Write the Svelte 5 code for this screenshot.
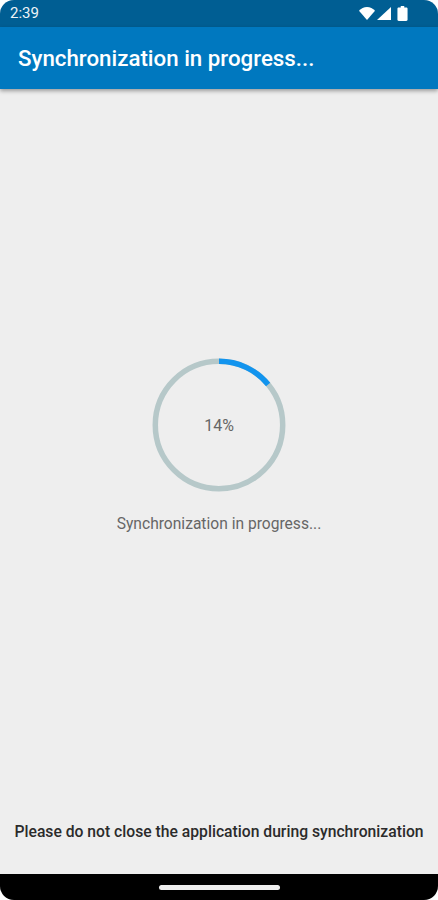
<script>
    const percent = 14;
    const radius = 63.7;
    const circumference = 2 * Math.PI * radius;
    const dash = (circumference * percent) / 100;
</script>

<div class="screen">
    <div class="status-bar">
        <span class="time">2:39</span>
        <div class="status-icons">
            <svg width="16" height="13" viewBox="0 0 16 12" preserveAspectRatio="none">
                <path d="M0 3.4C2 1.4 5 0 8 0s6 1.4 8 3.4L8 12z" fill="#fff" />
            </svg>
            <svg class="signal" width="14" height="13" viewBox="0 0 14 13">
                <path d="M14 0v13H0z" fill="#fff" />
            </svg>
            <svg width="11" height="15" viewBox="0 0 10 15" preserveAspectRatio="none">
                <path
                    d="M3.4 0h3.2v1.4h1.8c.7 0 1.2.5 1.2 1.2v11.2c0 .7-.5 1.2-1.2 1.2H1.6c-.7 0-1.2-.5-1.2-1.2V2.600c0-.7.5-1.200 1.200-1.200h1.800z"
                    fill="#fff"
                />
            </svg>
        </div>
    </div>

    <header class="app-bar">
        <h1>Synchronization in progress...</h1>
    </header>

    <main>
        <div class="progress">
            <svg class="ring" width="134" height="134" viewBox="0 0 134 134">
                <circle cx="67" cy="67" r={radius} class="track" />
                <circle
                    cx="67"
                    cy="67"
                    r={radius}
                    class="bar"
                    stroke-dasharray="{dash} {circumference}"
                    transform="rotate(-90 67 67)"
                />
            </svg>
            <span class="percent">{percent}%</span>
        </div>
        <p class="message">Synchronization in progress...</p>
        <p class="warning">Please do not close the application during synchronization</p>
    </main>

    <div class="nav-bar">
        <div class="home-pill"></div>
    </div>
</div>

<style>
    :global(body) {
        background: #fff;
    }

    .screen {
        height: 900px;
        display: flex;
        flex-direction: column;
        background: #eeeeee;
        border-radius: 14px;
        overflow: hidden;
        font-family: Roboto, "Noto Sans", sans-serif;
    }

    .status-bar {
        height: 27px;
        flex: none;
        display: flex;
        align-items: center;
        justify-content: space-between;
        padding: 0 30px 0 10px;
        background: #005e93;
        color: #eef3f7;
    }

    .time {
        font-size: 15px;
        line-height: 27px;
    }

    .status-icons {
        display: flex;
        align-items: center;
        gap: 2px;
    }

    .signal {
        margin-right: 4px;
    }

    .app-bar {
        height: 62px;
        flex: none;
        display: flex;
        align-items: center;
        padding: 0 18px;
        background: #0078bf;
        box-shadow: 0 2px 4px rgba(0, 0, 0, 0.35);
        z-index: 1;
    }

    h1 {
        margin: 0;
        font-size: 22.3px;
        font-weight: 500;
        color: #fff;
    }

    main {
        flex: 1;
        display: flex;
        flex-direction: column;
        align-items: center;
        padding: 269px 0 32px;
    }

    .progress {
        position: relative;
        width: 134px;
        height: 134px;
    }

    .ring {
        display: block;
    }

    .track,
    .bar {
        fill: none;
        stroke-width: 5.5;
    }

    .track {
        stroke: #b6c8c9;
    }

    .bar {
        stroke: #1294ee;
    }

    .percent {
        position: absolute;
        inset: 0;
        display: flex;
        align-items: center;
        justify-content: center;
        font-size: 16px;
        color: #666;
    }

    .message {
        margin: 22px 0 0;
        font-size: 15.6px;
        line-height: 20px;
        color: #666;
    }

    .warning {
        margin: auto 0 0;
        font-size: 15.7px;
        line-height: 20px;
        font-weight: 500;
        color: #2b2b2b;
    }

    .nav-bar {
        height: 26px;
        flex: none;
        display: flex;
        justify-content: center;
        padding-top: 11px;
        box-sizing: border-box;
        background: #000;
    }

    .home-pill {
        width: 121px;
        height: 5px;
        border-radius: 3px;
        background: #eeeeee;
    }
</style>
